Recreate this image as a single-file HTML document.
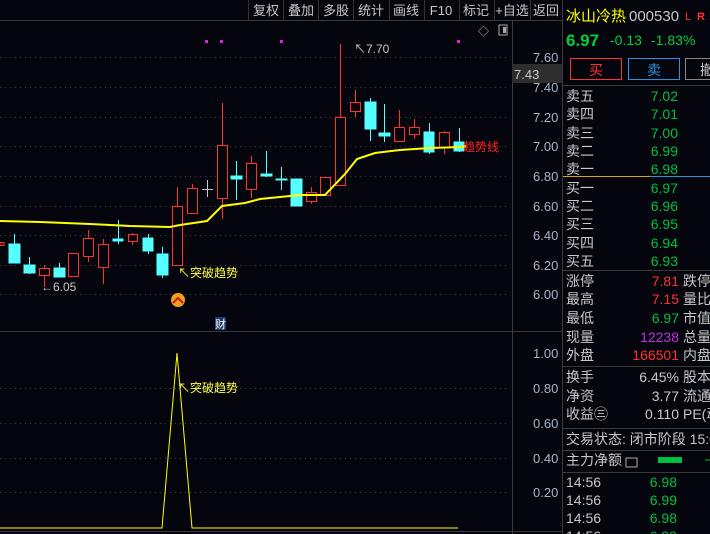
<!DOCTYPE html>
<html><head><meta charset="utf-8">
<style>
html,body{margin:0;padding:0;background:#05050d;width:710px;height:534px;overflow:hidden;font-family:"Liberation Sans","Noto Sans CJK SC",sans-serif;}
svg{position:absolute;left:0;top:0}
text{font-family:"Liberation Sans","Noto Sans CJK SC",sans-serif}
</style></head><body>
<svg width="710" height="534" viewBox="0 0 710 534" xmlns="http://www.w3.org/2000/svg">
<rect width="710" height="534" fill="#05050d"/>
<!-- toolbar -->
<line x1="0" y1="20.5" x2="562" y2="20.5" stroke="#3a3a3a"/>
<g stroke="#333" stroke-width="1">
<line x1="248.5" y1="0" x2="248.5" y2="20"/><line x1="283.5" y1="0" x2="283.5" y2="20"/><line x1="318.5" y1="0" x2="318.5" y2="20"/><line x1="353.5" y1="0" x2="353.5" y2="20"/><line x1="389.5" y1="0" x2="389.5" y2="20"/><line x1="424.5" y1="0" x2="424.5" y2="20"/><line x1="459.5" y1="0" x2="459.5" y2="20"/><line x1="494.5" y1="0" x2="494.5" y2="20"/><line x1="530.5" y1="0" x2="530.5" y2="20"/>
</g>
<g fill="#c8c8c8" font-size="13" text-anchor="middle">
<text x="266" y="15">复权</text><text x="301" y="15">叠加</text><text x="336" y="15">多股</text><text x="371" y="15">统计</text><text x="406" y="15">画线</text><text x="441" y="15">F10</text><text x="476" y="15">标记</text><text x="512" y="15">+自选</text><text x="546" y="15">返回</text>
</g>
<!-- axis borders -->
<line x1="512.5" y1="20" x2="512.5" y2="534" stroke="#3a3a3a"/>
<line x1="562.5" y1="0" x2="562.5" y2="534" stroke="#3a3a3a"/>
<line x1="0" y1="331.5" x2="562" y2="331.5" stroke="#3a3a3a"/>
<line x1="0" y1="531.5" x2="562" y2="531.5" stroke="#3a3a3a"/>
<!-- grid -->
<g stroke="#3c3c3c" stroke-dasharray="1,4">
<line x1="0" y1="57.5" x2="510" y2="57.5"/><line x1="0" y1="87.5" x2="510" y2="87.5"/><line x1="0" y1="117.5" x2="510" y2="117.5"/><line x1="0" y1="146.5" x2="510" y2="146.5"/><line x1="0" y1="176.5" x2="510" y2="176.5"/><line x1="0" y1="206.5" x2="510" y2="206.5"/><line x1="0" y1="235.5" x2="510" y2="235.5"/><line x1="0" y1="265.5" x2="510" y2="265.5"/><line x1="0" y1="294.5" x2="510" y2="294.5"/>
<line x1="0" y1="388.5" x2="510" y2="388.5"/><line x1="0" y1="423.5" x2="510" y2="423.5"/><line x1="0" y1="458.5" x2="510" y2="458.5"/><line x1="0" y1="492.5" x2="510" y2="492.5"/>
</g>
<g fill="#a8b4c8" font-size="13">
<text x="533" y="62">7.60</text><text x="533" y="92">7.40</text><text x="533" y="122">7.20</text><text x="533" y="151">7.00</text><text x="533" y="181">6.80</text><text x="533" y="211">6.60</text><text x="533" y="240">6.40</text><text x="533" y="270">6.20</text><text x="533" y="299">6.00</text>
<text x="533" y="358">1.00</text><text x="533" y="393">0.80</text><text x="533" y="428">0.60</text><text x="533" y="463">0.40</text><text x="533" y="497">0.20</text>
</g>
<rect x="512" y="64" width="50" height="19" fill="#2e2e2e"/>
<text x="514" y="79" fill="#c8c8c8" font-size="13">7.43</text>
<text x="478" y="35" fill="#bbb" font-size="11">◇</text>
<rect x="499" y="25" width="8" height="10" fill="none" stroke="#aaa"/><rect x="503" y="27" width="3" height="6" fill="#aaa"/>
<!-- magenta dots -->
<g fill="#e020e0"><rect x="205" y="40" width="3" height="3"/><rect x="220" y="40" width="3" height="3"/><rect x="280" y="40" width="3" height="3"/><rect x="457" y="40" width="3" height="3"/></g>
<!-- candles cyan -->
<g stroke="#55ffff" fill="#55ffff">
<line x1="14.5" y1="234" x2="14.5" y2="263"/><rect x="9" y="244" width="11" height="19"/>
<line x1="29.5" y1="257" x2="29.5" y2="274"/><rect x="24" y="265" width="11" height="8"/>
<line x1="59.5" y1="263" x2="59.5" y2="277"/><rect x="54" y="268" width="11" height="9"/>
<line x1="118.5" y1="220" x2="118.5" y2="244"/><rect x="113" y="239" width="10" height="2"/>
<line x1="148.5" y1="234" x2="148.5" y2="254"/><rect x="143" y="238" width="10" height="13"/>
<line x1="162.5" y1="247" x2="162.5" y2="278"/><rect x="157" y="254" width="11" height="21"/>
<line x1="236.5" y1="161" x2="236.5" y2="200"/><rect x="231" y="176" width="11" height="3"/>
<line x1="266.5" y1="151" x2="266.5" y2="177"/><rect x="261" y="174" width="11" height="2"/>
<line x1="281.5" y1="167" x2="281.5" y2="190"/><rect x="276" y="179" width="11" height="1"/>
<line x1="296.5" y1="179" x2="296.5" y2="206"/><rect x="291" y="179" width="11" height="27"/>
<line x1="370.5" y1="98" x2="370.5" y2="141"/><rect x="365" y="102" width="11" height="27"/>
<line x1="384.5" y1="104" x2="384.5" y2="142"/><rect x="379" y="133" width="11" height="3"/>
<line x1="429.5" y1="123" x2="429.5" y2="154"/><rect x="424" y="132" width="10" height="20"/>
<line x1="459.5" y1="128" x2="459.5" y2="152"/><rect x="454" y="142" width="10" height="9"/>
</g>
<!-- candles red -->
<g stroke="#ff3232" fill="#05050d">
<rect x="0" y="242.5" width="4" height="3"/>
<line x1="44.5" y1="265" x2="44.5" y2="287"/><rect x="39.5" y="268.5" width="10" height="7"/>
<rect x="68.5" y="253.5" width="10" height="23"/>
<line x1="88.5" y1="230" x2="88.5" y2="262"/><rect x="83.5" y="238.5" width="10" height="18"/>
<line x1="103.5" y1="239" x2="103.5" y2="284"/><rect x="98.5" y="244.5" width="10" height="23"/>
<line x1="132.5" y1="233" x2="132.5" y2="245"/><rect x="128.5" y="234.5" width="9" height="7"/>
<line x1="177.5" y1="187" x2="177.5" y2="206"/><rect x="172.5" y="206.5" width="10" height="59"/>
<line x1="192.5" y1="184" x2="192.5" y2="188"/><rect x="187.5" y="188.5" width="10" height="25"/>
<line x1="222.5" y1="103" x2="222.5" y2="219"/><rect x="217.5" y="145.5" width="10" height="53"/>
<line x1="251.5" y1="156" x2="251.5" y2="198"/><rect x="246.5" y="163.5" width="10" height="26"/>
<line x1="311.5" y1="187" x2="311.5" y2="204"/><rect x="306.5" y="192.5" width="10" height="9"/>
<rect x="320.5" y="177.5" width="10" height="18"/>
<line x1="340.5" y1="44" x2="340.5" y2="117"/><rect x="335.5" y="117.5" width="10" height="68"/>
<line x1="355.5" y1="90" x2="355.5" y2="117"/><rect x="350.5" y="102.5" width="10" height="9"/>
<line x1="399.5" y1="110" x2="399.5" y2="127"/><rect x="394.5" y="127.5" width="10" height="14"/>
<line x1="414.5" y1="119" x2="414.5" y2="139"/><rect x="409.5" y="127.5" width="10" height="7"/>
<line x1="444.5" y1="131" x2="444.5" y2="154"/><rect x="439.5" y="132.5" width="10" height="15"/>
</g>
<g stroke="#c8c8c8"><line x1="207.5" y1="180" x2="207.5" y2="197"/><line x1="202" y1="189.5" x2="213" y2="189.5"/></g>
<!-- trend line -->
<polyline fill="none" stroke="#ffff00" stroke-width="2" points="0,221 40,222 90,224 130,226 170,227 180,225 207,221 222,206 245,203 260,199 300,195 325,195 345,174 357,159 375,153 400,150 430,148 462,147"/>
<line x1="462" y1="146.5" x2="466" y2="146.5" stroke="#ffff00" stroke-width="2"/>
<text x="463" y="151" fill="#ff2020" font-size="12">趋势线</text>
<text x="354" y="53" fill="#c8c8c8" font-size="12">↖7.70</text>
<text x="41" y="291" fill="#c8c8c8" font-size="12">←6.05</text>
<text x="178" y="277" fill="#ffff40" font-size="12">↖突破趋势</text>
<circle cx="178" cy="300" r="7" fill="#f0a020"/><path d="M173 303 L178 298 L183 303" stroke="#c02000" stroke-width="2" fill="none"/>
<rect x="215" y="317" width="11" height="13" fill="#1c3c6c"/><text x="215" y="328" fill="#fff" font-size="11">财</text>
<!-- lower indicator -->
<polyline fill="none" stroke="#ffff00" stroke-width="1" points="0,528 162,528 177,353 192,528 458,528"/>
<text x="178" y="392" fill="#ffff40" font-size="12">↖突破趋势</text>
<!-- right panel -->
<text x="566" y="21" fill="#ffff00" font-size="15">冰山冷热</text>
<text x="629" y="21" fill="#c8c8c8" font-size="15">000530</text>
<text x="685" y="20" fill="#ff3030" font-size="11">L</text><text x="697" y="20" fill="#ff3030" font-size="11" font-weight="bold">R</text>
<text x="566" y="46" fill="#00d040" font-size="17" font-weight="bold">6.97</text>
<text x="610" y="45" fill="#00d040" font-size="14">-0.13</text>
<text x="651" y="45" fill="#00d040" font-size="14">-1.83%</text>
<rect x="570.5" y="58.5" width="51" height="21" fill="none" stroke="#ff3030"/><text x="596" y="75" fill="#ff3030" font-size="14" text-anchor="middle">买</text>
<rect x="628.5" y="58.5" width="51" height="21" fill="none" stroke="#3090e0"/><text x="654" y="75" fill="#3090e0" font-size="14" text-anchor="middle">卖</text>
<rect x="685.5" y="58.5" width="30" height="21" fill="none" stroke="#888"/><text x="700" y="75" fill="#ccc" font-size="14">撤</text>
<line x1="563" y1="85.5" x2="710" y2="85.5" stroke="#3a3a3a"/>
<g font-size="14" fill="#c8c8c8">
<text x="566" y="101">卖五</text><text x="566" y="119">卖四</text><text x="566" y="138">卖三</text><text x="566" y="156">卖二</text><text x="566" y="174">卖一</text>
<text x="566" y="193">买一</text><text x="566" y="211">买二</text><text x="566" y="229">买三</text><text x="566" y="248">买四</text><text x="566" y="266">买五</text>
</g>
<g font-size="14" fill="#00c040" text-anchor="end">
<text x="678" y="101">7.02</text><text x="678" y="119">7.01</text><text x="678" y="138">7.00</text><text x="678" y="156">6.99</text><text x="678" y="174">6.98</text>
<text x="678" y="193">6.97</text><text x="678" y="211">6.96</text><text x="678" y="229">6.95</text><text x="678" y="248">6.94</text><text x="678" y="266">6.93</text>
</g>
<line x1="563" y1="176.5" x2="650" y2="176.5" stroke="#e0a020"/><line x1="650" y1="176.5" x2="710" y2="176.5" stroke="#3090e0"/>
<line x1="563" y1="270.5" x2="710" y2="270.5" stroke="#3a3a3a"/>
<g font-size="14" fill="#c8c8c8">
<text x="566" y="286">涨停</text><text x="566" y="304">最高</text><text x="566" y="323">最低</text><text x="566" y="342">现量</text><text x="566" y="360">外盘</text>
<text x="683" y="286">跌停</text><text x="683" y="304">量比</text><text x="683" y="323">市值</text><text x="683" y="342">总量</text><text x="683" y="360">内盘</text>
<text x="566" y="382">换手</text><text x="566" y="401">净资</text><text x="566" y="419">收益㊂</text>
<text x="683" y="382">股本</text><text x="683" y="401">流通</text><text x="683" y="419">PE(动</text>
<text x="566" y="444">交易状态: 闭市阶段 15:0</text>
<text x="566" y="465">主力净额</text>
<text x="566" y="487">14:56</text><text x="566" y="505">14:56</text><text x="566" y="523">14:56</text><text x="566" y="541">14:56</text>
</g>
<g font-size="14" text-anchor="end">
<text x="679" y="286" fill="#ff3030">7.81</text><text x="679" y="304" fill="#ff3030">7.15</text><text x="679" y="323" fill="#00c040">6.97</text><text x="679" y="342" fill="#c030e0">12238</text><text x="679" y="360" fill="#ff3030">166501</text>
<text x="679" y="382" fill="#c8c8c8">6.45%</text><text x="679" y="401" fill="#c8c8c8">3.77</text><text x="679" y="419" fill="#c8c8c8">0.110</text>
<text x="677" y="487" fill="#00c040">6.98</text><text x="677" y="505" fill="#00c040">6.99</text><text x="677" y="523" fill="#00c040">6.98</text><text x="677" y="541" fill="#00c040">6.99</text>
</g>
<line x1="563" y1="366.5" x2="710" y2="366.5" stroke="#3a3a3a"/>
<line x1="563" y1="428.5" x2="710" y2="428.5" stroke="#3a3a3a"/>
<line x1="563" y1="450.5" x2="710" y2="450.5" stroke="#3a3a3a"/>
<line x1="563" y1="472.5" x2="710" y2="472.5" stroke="#3a3a3a"/>
<rect x="626" y="458" width="11" height="9" fill="none" stroke="#aaa"/>
<rect x="658" y="457" width="24" height="6" fill="#00c040"/>
<line x1="705" y1="460" x2="710" y2="460" stroke="#00c040"/>
</svg>
</body></html>
